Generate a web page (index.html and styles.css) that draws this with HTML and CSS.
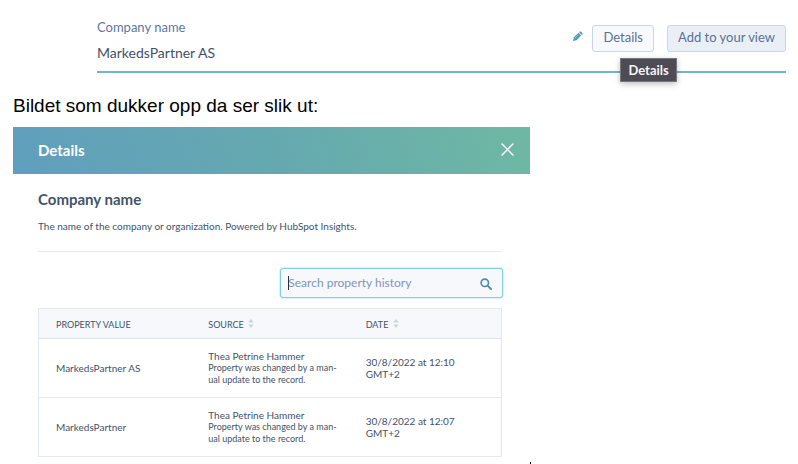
FILE: index.html
```html
<!DOCTYPE html>
<html lang="no">
<head>
<meta charset="utf-8">
<meta name="viewport" content="width=device-width, initial-scale=1">
<title>Details</title>
<link rel="stylesheet" href="styles.css">
</head>
<body>
<section class="field">
  <div class="field-text">
    <label class="field-label" for="company">Company name</label>
    <input class="field-value" id="company" type="text" value="MarkedsPartner AS">
  </div>
  <div class="field-actions">
    <svg class="pencil" viewBox="0 0 12 12" aria-hidden="true">
      <path d="M1 11l1-4 5-5 3 3-5 5z" fill="#4f9db5"/>
      <path d="M7.700 1.300l.6-.6q.7-.6 1.400 0l1.600 1.600q.6.7 0 1.400l-.6.6z" fill="#4f9db5"/>
      <path d="M3 8l4-4" stroke="#b5d8e2" stroke-width=".7"/>
    </svg>
    <div class="tip-anchor">
      <button class="btn" type="button">Details</button>
      <span class="tooltip" role="tooltip">Details</span>
    </div>
    <button class="btn btn-strong" type="button">Add to your view</button>
  </div>
</section>

<p class="caption">Bildet som dukker opp da ser slik ut:</p>

<div class="figure">
  <main class="panel">
    <header class="panel-head">
      <h1 class="panel-title">Details</h1>
      <button class="close" type="button" aria-label="Close">
        <svg viewBox="0 0 12 12" aria-hidden="true"><path d="M1 1l10 10M11 1L1 11" stroke="#fff" stroke-width="1.400" stroke-linecap="round"/></svg>
      </button>
    </header>
    <div class="panel-body">
      <h2 class="name">Company name</h2>
      <p class="desc">The name of the company or organization. Powered by HubSpot Insights.</p>
      <div class="search">
        <input class="search-input" type="text" placeholder="Search property history" aria-label="Search property history">
        <span class="search-caret"></span>
        <svg class="search-icon" viewBox="0 0 12 12" aria-hidden="true"><circle cx="4.800" cy="4.800" r="3.700" fill="none" stroke="#4a8fad" stroke-width="1.600"/><path d="M7.600 7.600l3.400 3.400" stroke="#4a8fad" stroke-width="1.900" stroke-linecap="round"/></svg>
      </div>
      <table class="history">
        <thead>
          <tr>
            <th class="col-value" scope="col">PROPERTY VALUE</th>
            <th class="col-source" scope="col">SOURCE <svg class="sort" viewBox="0 0 6 10" aria-hidden="true"><path d="M3 0l3 4H0zM3 10l3-4H0z" fill="#cbd3de"/></svg></th>
            <th scope="col">DATE <svg class="sort" viewBox="0 0 6 10" aria-hidden="true"><path d="M3 0l3 4H0zM3 10l3-4H0z" fill="#cbd3de"/></svg></th>
          </tr>
        </thead>
        <tbody>
          <tr>
            <td>MarkedsPartner AS</td>
            <td class="source">Thea Petrine Hammer<small class="note">Property was changed by a man&shy;ual update to the record.</small></td>
            <td>30/8/2022 at 12:10<br>GMT+2</td>
          </tr>
          <tr>
            <td>MarkedsPartner</td>
            <td class="source">Thea Petrine Hammer<small class="note">Property was changed by a man&shy;ual update to the record.</small></td>
            <td>30/8/2022 at 12:07<br>GMT+2</td>
          </tr>
        </tbody>
      </table>
    </div>
  </main>
  <span class="doc-caret"></span>
</div>
</body>
</html>
```
FILE: styles.css
```css
* {
  box-sizing: border-box;
}

body {
  margin: 0;
  padding: 17px 12px 0 13px;
  background: #fff;
  color: #43536a;
  font-family: Lato, "Open Sans", sans-serif;
  overflow: hidden;
}

button,
input {
  font-family: inherit;
}

.field {
  display: flex;
  justify-content: space-between;
  margin-left: 84px;
  height: 56px;
  border-bottom: 2px solid #72b5c9;
}

.field-text {
  display: flex;
  flex-direction: column;
  gap: 6px;
}

.field-label {
  font-size: 13px;
  line-height: 20px;
  color: #6078a0;
}

.field-value {
  width: 200px;
  padding: 0;
  border: 0;
  background: none;
  font-size: 14px;
  line-height: 20px;
  color: #42526a;
}

.field-actions {
  display: flex;
  align-items: flex-start;
  padding-top: 8px;
}

.pencil {
  width: 11px;
  height: 11px;
  margin: 6px 9px 0 0;
}

.tip-anchor {
  position: relative;
  margin-right: 13px;
}

.btn {
  display: block;
  height: 27px;
  padding: 0 10px 2px;
  border: 1px solid #cbd6e5;
  border-radius: 3px;
  background: #f7f9fc;
  font-size: 13px;
  line-height: 23px;
  color: #5c7094;
}

.btn-strong {
  background: #eaeff6;
}

.tooltip {
  position: absolute;
  top: 33px;
  left: 28px;
  padding: 0 7px;
  border: 1px solid #77777b;
  background: #4d4b53;
  box-shadow: 0 2px 6px rgba(0, 0, 0, .25);
  font-size: 13px;
  font-weight: 700;
  line-height: 22px;
  color: #f4f4f4;
}

.caption {
  margin: 22px 0 11px;
  font-family: "Liberation Sans", Arial, sans-serif;
  font-size: 19px;
  line-height: 21px;
  color: #000;
}

.figure {
  display: flex;
  align-items: flex-end;
}

.panel {
  flex: 0 1 517px;
}

.panel-head {
  display: flex;
  align-items: center;
  justify-content: space-between;
  height: 47px;
  padding: 0 16px 2px 25px;
  background: linear-gradient(70deg, #609fbd, #65a9b0 50%, #6fb8a3);
}

.panel-title {
  margin: 0;
  font-size: 15px;
  line-height: 20px;
  color: #fff;
}

.close {
  display: flex;
  padding: 0;
  border: 0;
  background: none;
}

.close svg {
  width: 13px;
  height: 13px;
}

.panel-body {
  display: flex;
  flex-direction: column;
  padding: 15px 28px 7px 25px;
}

.name {
  margin: 0;
  font-size: 15px;
  line-height: 20px;
}

.desc {
  margin: 9px 0 16px;
  padding-bottom: 17px;
  border-bottom: 1px solid #e6e9ee;
  font-size: 10px;
  line-height: 16px;
}

.search {
  position: relative;
  align-self: flex-end;
  width: 48%;
  margin: 0 -1px 10px 0;
}

.search-input {
  display: block;
  width: 100%;
  height: 30px;
  padding: 0 30px 1px 7px;
  border: 1px solid #7fd1de;
  border-radius: 3px;
  outline: 0;
  background: #f6f8fb;
  box-shadow: 0 0 2px #7fd1de;
  font-size: 12px;
  color: #33475b;
}

.search-input::placeholder {
  color: #8296b8;
  opacity: 1;
}

.search-caret {
  position: absolute;
  top: 8px;
  left: 8px;
  width: 1px;
  height: 14px;
  background: #22303f;
}

.search-icon {
  position: absolute;
  top: 10px;
  right: 11px;
  width: 12px;
  height: 12px;
}

.history {
  width: 100%;
  border: 1px solid #e3e8ef;
  border-collapse: collapse;
  table-layout: fixed;
  font-size: 10px;
  line-height: 12px;
}

.history th {
  height: 30px;
  padding: 2px 17px 0;
  background: #f6f8fb;
  border-bottom: 1px solid #dfe5ee;
  font-size: 9px;
  font-weight: 400;
  text-align: left;
}

.history td {
  height: 59px;
  padding: 0 17px 1px;
  border-bottom: 1px solid #e6eaf0;
}

.history .source {
  padding: 0 8px 1px 17px;
}

.col-value {
  width: 33%;
}

.col-source {
  width: 34%;
}

.sort {
  width: 6px;
  height: 9px;
  margin-left: 2px;
}

.note {
  display: block;
  font-size: 9px;
  line-height: 12px;
}

.doc-caret {
  width: 1px;
  height: 2px;
  background: #000;
}
```
